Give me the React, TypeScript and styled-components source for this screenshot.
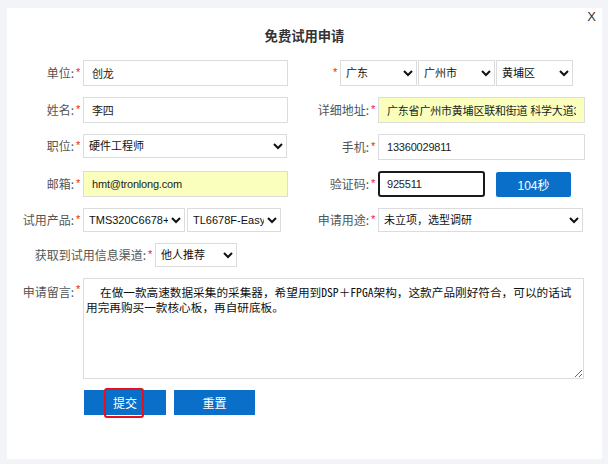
import React from "react";
import styled, { createGlobalStyle } from "styled-components";

const Global = createGlobalStyle`
  html, body { margin: 0; padding: 0; background: #f3f4f8; }
  body { font-family: "Noto Sans CJK SC", "Liberation Sans", sans-serif; }
  * { box-sizing: border-box; }
`;

const Page = styled.div`
  width: 608px;
  height: 464px;
  padding: 8px 0 0 7px;
`;

const Panel = styled.div`
  position: relative;
  width: 595px;
  height: 451px;
  background: #fff;
  padding-top: 18px;
`;

const Close = styled.div`
  position: absolute;
  top: 2px;
  right: 6px;
  font: 13px/14px "Liberation Sans", sans-serif;
  color: #333;
  cursor: pointer;
`;

const Title = styled.h1`
  margin: 0 0 14px;
  text-align: center;
  font: bold 13.3px/20px "Noto Sans CJK SC", sans-serif;
  color: #333;
`;

const Form = styled.form`
  display: flex;
  flex-direction: column;
  gap: 11px;
  margin: 0;
`;

const Row = styled.div`
  display: flex;
  align-items: flex-start;
`;

const Field = styled.div<{ $w?: number; $top?: boolean }>`
  display: flex;
  align-items: ${(p) => (p.$top ? "flex-start" : "center")};
  width: ${(p) => (p.$w ? `${p.$w}px` : "auto")};
`;

const Label = styled.label<{ $w: number; $top?: boolean }>`
  width: ${(p) => p.$w}px;
  text-align: right;
  font-size: 12px;
  line-height: 16px;
  color: #555;
  white-space: nowrap;
  padding-top: ${(p) => (p.$top ? "6px" : "0")};
`;

const Star = styled.span<{ $top?: boolean }>`
  width: 9px;
  padding-left: 2px;
  color: #f02020;
  font: 11px/16px "Liberation Sans", sans-serif;
  align-self: ${(p) => (p.$top ? "flex-start" : "center")};
  padding-top: ${(p) => (p.$top ? "6px" : "0")};
  margin-top: -3px;
`;

const Input = styled.input<{ $w: number; $fill?: boolean; $focus?: boolean }>`
  width: ${(p) => p.$w}px;
  height: 26px;
  border: ${(p) => (p.$focus ? "2px solid #1a1a1a" : "1px solid #dcdcdc")};
  border-radius: ${(p) => (p.$focus ? "3px" : "0")};
  padding: 0 ${(p) => (p.$focus ? "7px" : "8px")};
  background: ${(p) => (p.$fill ? "#faffbd" : "#fff")};
  font: 11px "Liberation Sans", "Noto Sans CJK SC", sans-serif;
  letter-spacing: -0.2px;
  color: #222;
  outline: none;
`;

const Select = styled.select<{ $w: number; $h?: number }>`
  width: ${(p) => p.$w}px;
  height: ${(p) => p.$h ?? 24}px;
  border: 1px solid #dcdcdc;
  border-radius: 0;
  background: #fff;
  padding: 0 0 0 1px;
  font: 11px "Liberation Sans", "Noto Sans CJK SC", sans-serif;
  color: #111;
  outline: none;
`;

const Group = styled.div<{ $gap: number }>`
  display: flex;
  gap: ${(p) => p.$gap}px;
`;

const CodeButton = styled.button`
  margin-left: 11px;
  width: 75px;
  height: 25px;
  border: none;
  border-radius: 2px;
  background: #0a6fc9;
  color: #fff;
  font: 12px "Liberation Sans", "Noto Sans CJK SC", sans-serif;
`;

const Message = styled.textarea`
  width: 501px;
  height: 101px;
  border: 1px solid #dcdcdc;
  padding: 5px 2px;
  text-indent: 14px;
  font: 11.65px/15px "Noto Sans Mono CJK SC", "Noto Sans CJK SC", monospace;
  color: #111;
  resize: both;
  outline: none;
`;

const Actions = styled.div`
  display: flex;
  gap: 8px;
  padding-left: 77px;
`;

const Button = styled.button<{ $w: number }>`
  position: relative;
  width: ${(p) => p.$w}px;
  height: 25px;
  border: none;
  background: #0a6fc9;
  color: #fff;
  font: 12px "Noto Sans CJK SC", sans-serif;
  cursor: pointer;
`;

const Highlight = styled.span`
  position: absolute;
  left: 20px;
  top: -2px;
  width: 40px;
  height: 30px;
  border: 2px solid #e8101a;
  border-radius: 3px;
  pointer-events: none;
`;

export default function App() {
  return (
    <Page>
      <Global />
      <Panel>
        <Close>X</Close>
        <Title>免费试用申请</Title>
        <Form onSubmit={(e) => e.preventDefault()}>
          <Row>
            <Field $w={293}>
              <Label $w={67}>单位:</Label>
              <Star>*</Star>
              <Input $w={205} defaultValue="创龙" />
            </Field>
            <Field>
              <Label $w={31} />
              <Star>*</Star>
              <Group $gap={1}>
                <Select $w={77} $h={26} defaultValue="gd">
                  <option value="gd">广东</option>
                </Select>
                <Select $w={77} $h={26} defaultValue="gz">
                  <option value="gz">广州市</option>
                </Select>
                <Select $w={77} $h={26} defaultValue="hp">
                  <option value="hp">黄埔区</option>
                </Select>
              </Group>
            </Field>
          </Row>
          <Row>
            <Field $w={293}>
              <Label $w={67}>姓名:</Label>
              <Star>*</Star>
              <Input $w={205} defaultValue="李四" />
            </Field>
            <Field>
              <Label $w={69}>详细地址:</Label>
              <Star>*</Star>
              <Input $w={207} $fill defaultValue="广东省广州市黄埔区联和街道 科学大道33号" />
            </Field>
          </Row>
          <Row>
            <Field $w={293}>
              <Label $w={67}>职位:</Label>
              <Star>*</Star>
              <Select $w={204} defaultValue="hw">
                <option value="hw">硬件工程师</option>
              </Select>
            </Field>
            <Field>
              <Label $w={69}>手机:</Label>
              <Star>*</Star>
              <Input $w={207} defaultValue="13360029811" />
            </Field>
          </Row>
          <Row>
            <Field $w={293}>
              <Label $w={67}>邮箱:</Label>
              <Star>*</Star>
              <Input $w={205} $fill defaultValue="hmt@tronlong.com" />
            </Field>
            <Field>
              <Label $w={69}>验证码:</Label>
              <Star>*</Star>
              <Input $w={107} $focus defaultValue="925511" />
              <CodeButton type="button">104秒</CodeButton>
            </Field>
          </Row>
          <Row>
            <Field $w={293}>
              <Label $w={67}>试用产品:</Label>
              <Star>*</Star>
              <Group $gap={2}>
                <Select $w={102} defaultValue="a">
                  <option value="a">TMS320C6678+Kintex-7</option>
                </Select>
                <Select $w={94} defaultValue="b">
                  <option value="b">TL6678F-EasyEVM</option>
                </Select>
              </Group>
            </Field>
            <Field>
              <Label $w={69}>申请用途:</Label>
              <Star>*</Star>
              <Select $w={205} defaultValue="c">
                <option value="c">未立项，选型调研</option>
              </Select>
            </Field>
          </Row>
          <Row>
            <Field>
              <Label $w={139}>获取到试用信息渠道:</Label>
              <Star>*</Star>
              <Select $w={82} defaultValue="d">
                <option value="d">他人推荐</option>
              </Select>
            </Field>
          </Row>
          <Row>
            <Field $top>
              <Label $w={67} $top>
                申请留言:
              </Label>
              <Star $top>*</Star>
              <Message defaultValue="在做一款高速数据采集的采集器，希望用到DSP＋FPGA架构，这款产品刚好符合，可以的话试用完再购买一款核心板，再自研底板。" />
            </Field>
          </Row>
          <Actions>
            <Button $w={82} type="submit">
              提交
              <Highlight />
            </Button>
            <Button $w={81} type="reset">
              重置
            </Button>
          </Actions>
        </Form>
      </Panel>
    </Page>
  );
}
